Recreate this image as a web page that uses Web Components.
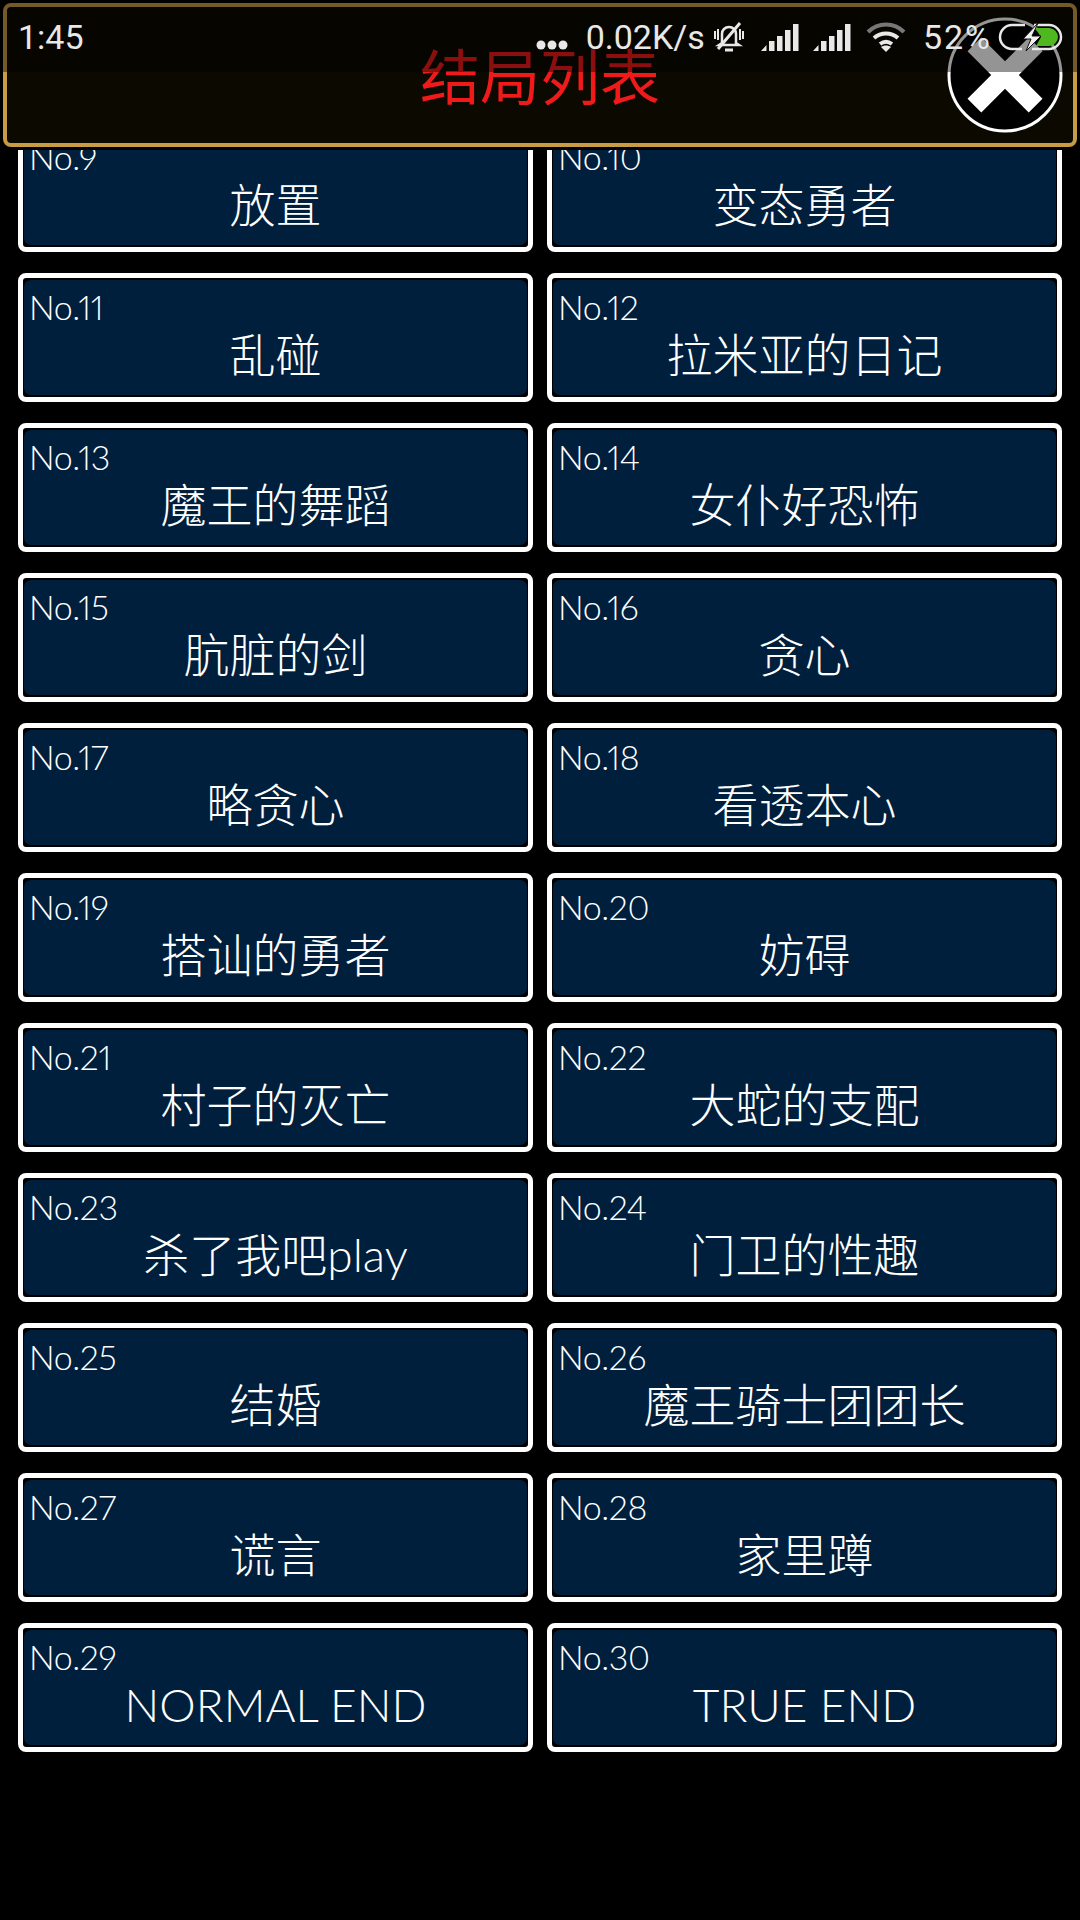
<!DOCTYPE html>
<html>
<head>
<meta charset="utf-8">
<style>
  html, body { margin: 0; background: #000; }
  body { width: 1080px; height: 1920px; overflow: hidden; font-family: Lato, "Noto Sans CJK SC", sans-serif; }
</style>
</head>
<body>
<ending-screen>
  <end-card slot="list" no="No.9" name="放置"></end-card>
  <end-card slot="list" no="No.10" name="变态勇者"></end-card>
  <end-card slot="list" no="No.11" name="乱碰"></end-card>
  <end-card slot="list" no="No.12" name="拉米亚的日记"></end-card>
  <end-card slot="list" no="No.13" name="魔王的舞蹈"></end-card>
  <end-card slot="list" no="No.14" name="女仆好恐怖"></end-card>
  <end-card slot="list" no="No.15" name="肮脏的剑"></end-card>
  <end-card slot="list" no="No.16" name="贪心"></end-card>
  <end-card slot="list" no="No.17" name="略贪心"></end-card>
  <end-card slot="list" no="No.18" name="看透本心"></end-card>
  <end-card slot="list" no="No.19" name="搭讪的勇者"></end-card>
  <end-card slot="list" no="No.20" name="妨碍"></end-card>
  <end-card slot="list" no="No.21" name="村子的灭亡"></end-card>
  <end-card slot="list" no="No.22" name="大蛇的支配"></end-card>
  <end-card slot="list" no="No.23" name="杀了我吧play"></end-card>
  <end-card slot="list" no="No.24" name="门卫的性趣"></end-card>
  <end-card slot="list" no="No.25" name="结婚"></end-card>
  <end-card slot="list" no="No.26" name="魔王骑士团团长"></end-card>
  <end-card slot="list" no="No.27" name="谎言"></end-card>
  <end-card slot="list" no="No.28" name="家里蹲"></end-card>
  <end-card slot="list" no="No.29" name="NORMAL END"></end-card>
  <end-card slot="list" no="No.30" name="TRUE END"></end-card>
</ending-screen>

<script>
const FONT = 'Lato, "Noto Sans CJK SC", sans-serif';

class EndCard extends HTMLElement {
    constructor() {
        super();
        this.attachShadow({mode: 'open'});
    }

    connectedCallback() {
        this.shadowRoot.innerHTML = `
        <style>
            :host {
                display: block;
                box-sizing: border-box;
                height: 129px;
                border: 5px solid #fff;
                border-radius: 8px;
                background: #000;
                padding: 2px 1px;
            }
            .face {
                box-sizing: border-box;
                height: 100%;
                border-radius: 7px;
                background: #001f3d;
                color: #fff;
                font-family: ${FONT};
                font-weight: 300;
                padding: 7px 0 0 0;
            }
            .no {
                font-size: 34px;
                line-height: 40px;
                padding-left: 5px;
                font-variant-numeric: proportional-nums;
                letter-spacing: -.4px;
            }
            .name { font-size: 46px; line-height: 55px; text-align: center; }
        </style>
        <div class="face">
            <div class="no">${this.getAttribute('no')}</div>
            <div class="name">${this.getAttribute('name')}</div>
        </div>
    `;
    }
}

class StatusBar extends HTMLElement {
    constructor() {
        super();
        this.attachShadow({mode: 'open'});
    }

    connectedCallback() {
        const signal = `<svg width="38" height="27" viewBox="0 0 38 27" fill="#e8e8e8">
            <path d="M0 27l5.500-6v6zM8 17h5.500v10H8zM16 12h5.500v15H16zM24 6h5.500v21H24zM32 0h5.500v27H32z"/></svg>`;
        this.shadowRoot.innerHTML = `
        <style>
            :host {
                position: absolute;
                left: 0; top: 0; right: 0;
                height: 72px;
                background: rgba(0,0,0,.42);
                color: #e8e8e8;
                font-family: Roboto, sans-serif;
                font-size: 34px;
            }
            .row { display: flex; align-items: center; height: 74px; padding: 0 17px 0 18px; }
            .time { flex: 1; }
            .pct { letter-spacing: 2px; }
            svg { display: block; }
        </style>
        <div class="row">
            <span class="time">1:45</span>
            <svg width="32" height="10" viewBox="0 0 32 10" fill="#e8e8e8" style="margin:16px 18px 0 0">
                <circle cx="5" cy="5" r="4.500"/><circle cx="16" cy="5" r="4.500"/><circle cx="27" cy="5" r="4.500"/></svg>
            <span>0.02K/s</span>
            <svg width="34" height="30" viewBox="0 0 32 30" fill="none" stroke="#e8e8e8" stroke-width="2.500" style="margin:0 15px 0 7px">
                <path d="M9 21V12c0-4 3-7 7-7s7 3 7 7v9l3 2H6z"/><path d="M12 28h8" stroke-width="3"/>
                <path d="M27 1L5 27" stroke-width="3"/><path d="M2 9v8M5 7v11M27 7v11M30 9v8" stroke-width="2"/></svg>
            ${signal}
            <span style="width:14px"></span>
            ${signal}
            <svg width="40" height="30" viewBox="0 0 40 30" fill="none" stroke="#e8e8e8" style="margin:0 17px 0 15px">
                <path d="M2 10C12 0 28 0 38 10" stroke-width="4" stroke="#777"/>
                <path d="M8 16c7-6 17-6 24 0" stroke-width="4"/>
                <path d="M14 22c4-3 8-3 12 0" stroke-width="4"/>
                <path d="M20 30l-5-5c3-2 7-2 10 0z" fill="#e8e8e8" stroke="none"/></svg>
            <span class="pct">52%</span>
            <svg width="65" height="28" viewBox="0 0 65 28" style="margin-left:6px">
                <path d="M27 2H14a12 12 0 0 0 0 24h10M36 2h15a12 12 0 0 1 0 24H34" fill="none" stroke="#e8e8e8" stroke-width="2.500"/>
                <path d="M37 5h14a9 9 0 0 1 0 18H38l5-9z" fill="#4fb81e"/>
                <path d="M40 0L25 16h8l-5 12 15-15h-9l6-13z" fill="#f0f0f0" stroke="#111" stroke-width="1"/></svg>
        </div>
    `;
    }
}

class CloseButton extends HTMLElement {
    constructor() {
        super();
        this.attachShadow({mode: 'open'});
    }

    connectedCallback() {
        this.shadowRoot.innerHTML = `
        <style>
            :host { display: block; width: 116px; height: 116px; }
            svg { display: block; }
        </style>
        <svg width="116" height="116" viewBox="0 0 116 116">
            <circle cx="58" cy="58" r="56" fill="#000" stroke="#fff" stroke-width="3"/>
            <path d="M20.500 34.300L34.300 20.500 58 44.200 81.700 20.500 95.500 34.300 71.800 58 95.500 81.700 81.700 95.500 58 71.800 34.300 95.500 20.500 81.700 44.200 58z" fill="#fff"/>
        </svg>
    `;
    }
}

class EndingScreen extends HTMLElement {
    constructor() {
        super();
        this.attachShadow({mode: 'open'});
    }

    connectedCallback() {
        this.shadowRoot.innerHTML = `
        <style>
            :host { display: block; position: relative; width: 1080px; height: 1920px; background: #000; overflow: hidden; }
            header {
                box-sizing: border-box;
                height: 144px;
                margin: 3px 3px 3px 3px;
                border: 4px solid #c89b45;
                border-radius: 8px;
                background: #0c0a00;
                display: flex;
                align-items: center;
                justify-content: center;
                position: relative;
            }
            h1 {
                margin: 0;
                font: 400 60px ${FONT};
                color: #f01a1a;
                position: relative;
                top: -2px;
            }
            close-button { position: absolute; right: 10px; top: 10px; }
            .clip { height: 1770px; overflow: hidden; }
            .list {
                margin-top: -27px;
                padding: 0 18px;
                display: grid;
                grid-template-columns: 515px 515px;
                column-gap: 14px;
                row-gap: 21px;
            }
        </style>
        <header>
            <h1>结局列表</h1>
            <close-button></close-button>
        </header>
        <div class="clip"><div class="list"><slot name="list"></slot></div></div>
        <status-bar></status-bar>
    `;
    }
}

customElements.define('end-card', EndCard);
customElements.define('status-bar', StatusBar);
customElements.define('close-button', CloseButton);
customElements.define('ending-screen', EndingScreen);
</script>
</body>
</html>
